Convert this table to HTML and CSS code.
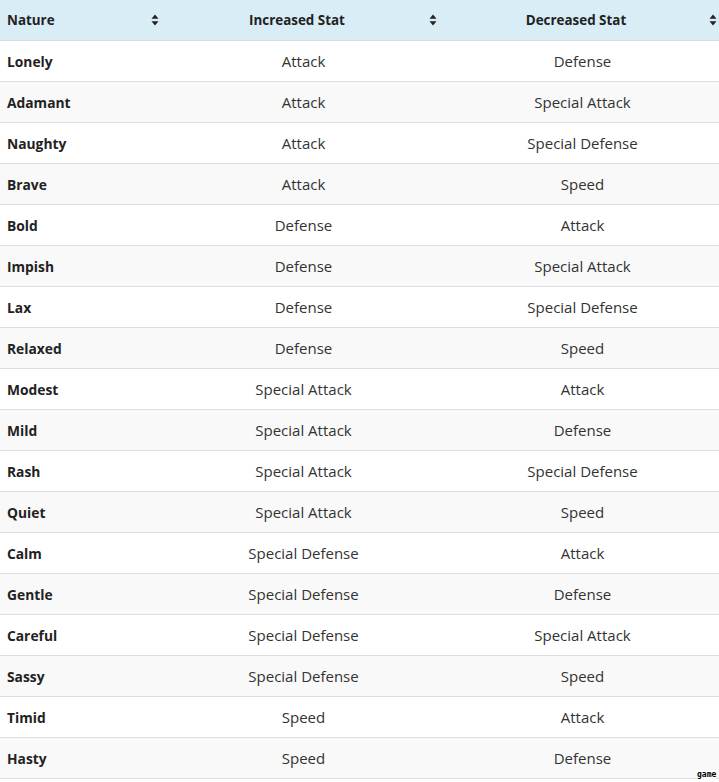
FILE: index.html
```html
<!DOCTYPE html>
<html lang="en">
<head>
<meta charset="utf-8">
<title>Natures</title>
<link rel="stylesheet" href="styles.css">
</head>
<body>
<div class="table-wrap">
  <table class="natures">
    <colgroup>
      <col class="c1"><col class="c2"><col class="c3">
    </colgroup>
    <thead>
      <tr>
        <th><div class="th-inner"><span class="label left">Nature</span><svg class="sort" viewBox="0 0 8 12" width="8" height="12"><path d="M4 0.5 L7.5 4.8 L0.5 4.8 Z M0.5 7.2 L7.5 7.2 L4 11.5 Z" fill="#222"/></svg></div></th>
        <th><div class="th-inner"><span class="label">Increased Stat</span><svg class="sort" viewBox="0 0 8 12" width="8" height="12"><path d="M4 0.5 L7.5 4.8 L0.5 4.8 Z M0.5 7.2 L7.5 7.2 L4 11.5 Z" fill="#222"/></svg></div></th>
        <th><div class="th-inner"><span class="label">Decreased Stat</span><svg class="sort" viewBox="0 0 8 12" width="8" height="12"><path d="M4 0.5 L7.5 4.8 L0.5 4.8 Z M0.5 7.2 L7.5 7.2 L4 11.5 Z" fill="#222"/></svg></div></th>
      </tr>
    </thead>
    <tbody>
      <tr><td>Lonely</td><td>Attack</td><td>Defense</td></tr>
      <tr><td>Adamant</td><td>Attack</td><td>Special Attack</td></tr>
      <tr><td>Naughty</td><td>Attack</td><td>Special Defense</td></tr>
      <tr><td>Brave</td><td>Attack</td><td>Speed</td></tr>
      <tr><td>Bold</td><td>Defense</td><td>Attack</td></tr>
      <tr><td>Impish</td><td>Defense</td><td>Special Attack</td></tr>
      <tr><td>Lax</td><td>Defense</td><td>Special Defense</td></tr>
      <tr><td>Relaxed</td><td>Defense</td><td>Speed</td></tr>
      <tr><td>Modest</td><td>Special Attack</td><td>Attack</td></tr>
      <tr><td>Mild</td><td>Special Attack</td><td>Defense</td></tr>
      <tr><td>Rash</td><td>Special Attack</td><td>Special Defense</td></tr>
      <tr><td>Quiet</td><td>Special Attack</td><td>Speed</td></tr>
      <tr><td>Calm</td><td>Special Defense</td><td>Attack</td></tr>
      <tr><td>Gentle</td><td>Special Defense</td><td>Defense</td></tr>
      <tr><td>Careful</td><td>Special Defense</td><td>Special Attack</td></tr>
      <tr><td>Sassy</td><td>Special Defense</td><td>Speed</td></tr>
      <tr><td>Timid</td><td>Speed</td><td>Attack</td></tr>
      <tr><td>Hasty</td><td>Speed</td><td>Defense</td></tr>
    </tbody>
  </table>
</div>
<span class="watermark">game</span>
</body>
</html>
```
FILE: styles.css
```css
html, body {
  margin: 0;
  padding: 0;
  background: #fff;
}
body {
  font-family: "Open Sans", "Noto Sans", sans-serif;
  color: #333;
  position: relative;
  min-height: 782px;
}
.table-wrap {
  width: 719px;
  overflow: hidden;
}
.natures {
  width: 723px;
  border-collapse: collapse;
  table-layout: fixed;
}
.c1 { width: 165px; }
.c2 { width: 278px; }
.c3 { width: 280px; }
.natures th {
  background: #d9edf7;
  height: 40px;
  padding: 0 6px 0 7px;
  border-bottom: 1px solid #dcdcdc;
  font-size: 13.4px;
  font-weight: 700;
  color: #222;
}
.th-inner {
  display: flex;
  align-items: center;
  gap: 7px;
}
.label {
  flex: 1;
  text-align: center;
}
.label.left {
  text-align: left;
}
.sort {
  flex: none;
  display: block;
}
.natures td {
  height: 40px;
  padding: 0 8px 0 7px;
  border-bottom: 1px solid #dedede;
  text-align: center;
  font-size: 15px;
  color: #333;
}
.natures td:first-child {
  text-align: left;
  font-weight: 700;
  font-size: 13.8px;
  color: #222;
}
.natures tbody tr:nth-child(even) td {
  background: #f9f9f9;
}
.watermark {
  position: absolute;
  left: 697px;
  top: 770px;
  font-family: "DejaVu Sans Mono", monospace;
  font-size: 8px;
  font-weight: 700;
  line-height: 10px;
  color: #000;
  background: #fff;
}
```
